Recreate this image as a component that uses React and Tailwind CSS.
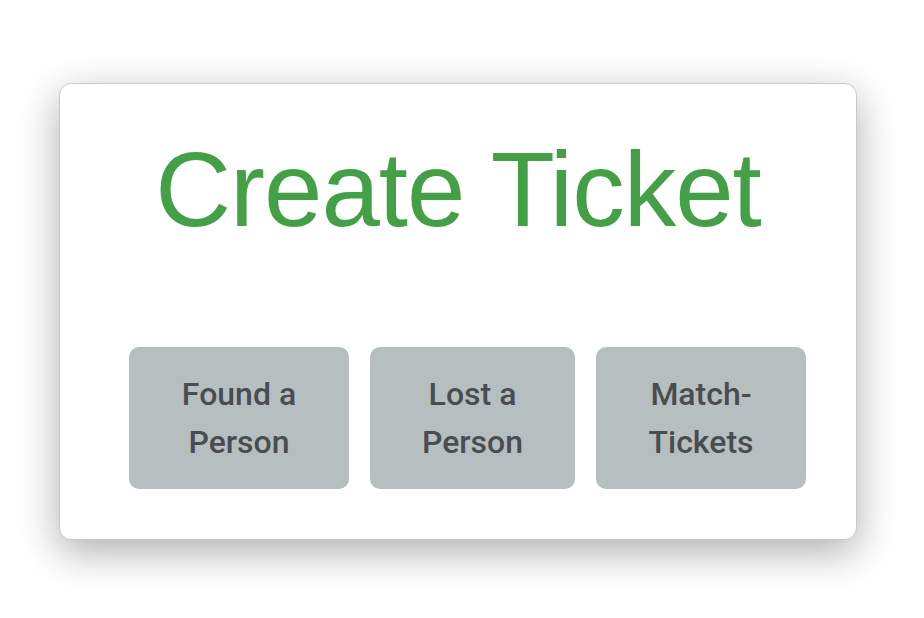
import React from 'react';

const tickets = [
  { id: 'found', lines: ['Found a', 'Person'], width: 'w-[220px]' },
  { id: 'lost', lines: ['Lost a', 'Person'], width: 'w-[205px]' },
  { id: 'match', lines: ['Match-', 'Tickets'], width: 'w-[210px]' },
];

const App = () => {
  return (
    <div className="w-[924px] h-[618px] bg-white pt-[83px] pl-[59px]">
      {/* Card */}
      <div className="w-[798px] h-[457px] bg-white rounded-[12px] border border-[#c8c8c8] shadow-[0_12px_40px_rgba(0,0,0,0.32)] flex flex-col">
        <h1 className="text-center text-[#43a047] text-[105px] leading-none tracking-[-1px] mt-[53px] font-['Liberation_Sans',Arial,sans-serif]">
          Create Ticket
        </h1>

        {/* Ticket type buttons */}
        <div className="flex gap-[21px] pl-[69px] mt-auto mb-[50px]">
          {tickets.map((t) => (
            <button
              key={t.id}
              className={`${t.width} h-[142px] rounded-[10px] bg-[#b6bfc0] text-[#4a4d4f] text-[32px] leading-[48px] font-medium font-['Roboto',sans-serif] flex flex-col items-center justify-center`}
            >
              {t.lines.map((l) => (
                <span key={l}>{l}</span>
              ))}
            </button>
          ))}
        </div>
      </div>
    </div>
  );
};

export default App;
